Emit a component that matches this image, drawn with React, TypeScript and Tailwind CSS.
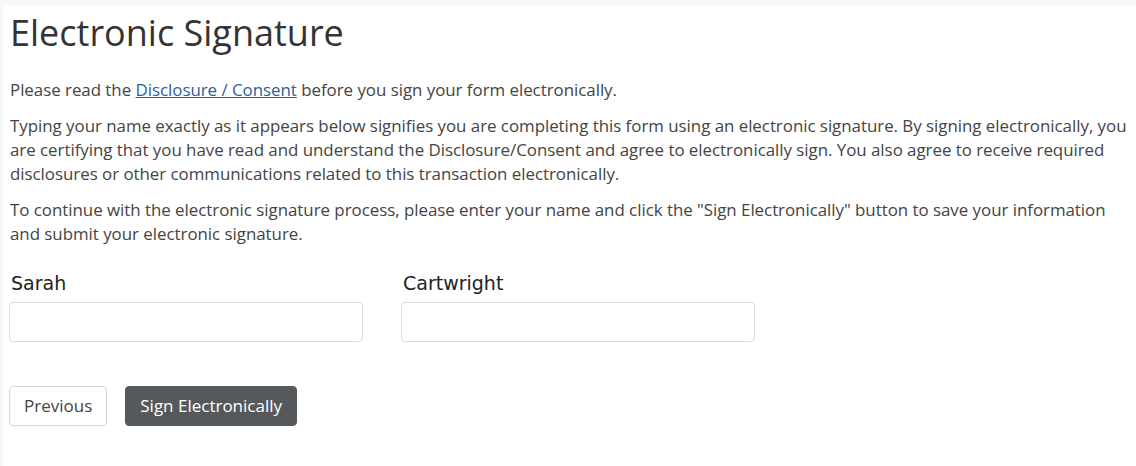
import React from "react";

function NameField({ label }: { label: string }) {
  return (
    <div className="flex w-[354px] flex-col">
      <label className="pl-[2px] font-['DejaVu_Sans',Verdana,sans-serif] text-[19px] leading-[21px] text-[#222]">
        {label}
      </label>
      <input
        type="text"
        className="mt-2 h-10 w-full rounded border border-[#dcdcdc] bg-white px-3 text-base outline-none"
      />
    </div>
  );
}

export default function App() {
  return (
    <div className="min-h-[466px] bg-[#f7f7f7] pl-[3px] pt-[5px] font-['Open_Sans',sans-serif]">
      <div className="min-h-[461px] bg-white pl-[7px] pr-[4px] pt-2">
        <h1 className="text-[36px] leading-[40px] font-normal text-[#333]">
          Electronic Signature
        </h1>

        <div className="mt-[25px] space-y-3 text-[16.9px] leading-6 tracking-[-0.03px] text-[#444]">
          <p>
            Please read the{" "}
            <a href="#" className="text-[#2a5f9e] underline">
              Disclosure / Consent
            </a>{" "}
            before you sign your form electronically.
          </p>
          <p>
            Typing your name exactly as it appears below signifies you are
            completing this form using an electronic signature. By signing
            electronically, you are certifying that you have read and
            understand the Disclosure/Consent and agree to electronically sign.
            You also agree to receive required disclosures or other
            communications related to this transaction electronically.
          </p>
          <p>
            To continue with the electronic signature process, please enter
            your name and click the "Sign Electronically" button to save your
            information and submit your electronic signature.
          </p>
        </div>

        <div className="-ml-px mt-[27px] flex gap-[38px]">
          <NameField label="Sarah" />
          <NameField label="Cartwright" />
        </div>

        <div className="-ml-px mt-11 flex gap-[18px]">
          <button className="h-10 rounded border border-[#d6d6d6] bg-white px-[14px] text-[17px] text-[#444]">
            Previous
          </button>
          <button className="h-10 rounded border border-[#55595c] bg-[#55595c] px-[14px] text-[17px] text-white">
            Sign Electronically
          </button>
        </div>
      </div>
    </div>
  );
}
